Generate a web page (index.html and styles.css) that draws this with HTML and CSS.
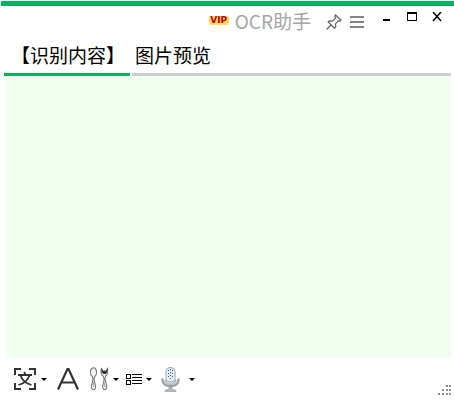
FILE: index.html
```html
<!DOCTYPE html>
<html lang="zh-CN">

<head>
  <meta charset="utf-8">
  <meta name="viewport" content="width=device-width, initial-scale=1">
  <title>OCR助手</title>
  <link rel="stylesheet" href="styles.css">
</head>

<body>
  <div class="window">
    <header class="titlebar">
      <span class="vip">VIP</span>
      <h1 class="title">OCR助手</h1>
      <button class="icon-btn pin" type="button" aria-label="置顶">
        <svg width="16" height="16" viewBox="0 0 16 16" fill="none" stroke="#606060" stroke-width="1.200">
          <path d="M9.500 1l5.500 5-1.200 1.200-1.200-.5-3.200 3.200.4 3-1.300 1.300L2.200 8l1.300-1.200 3 .3 3.200-3.300-.9-1.600zM5 11L.5 15.500" />
        </svg>
      </button>
      <button class="icon-btn menu" type="button" aria-label="菜单">
        <svg width="14" height="12" viewBox="0 0 14 12" fill="#858585">
          <path d="M0 0h14v2H0zM0 5h14v2H0zM0 10h14v2H0z" />
        </svg>
      </button>
      <div class="controls">
        <button class="win-btn" type="button" aria-label="最小化">
          <svg width="10" height="10" viewBox="0 0 10 10"><path d="M1 7h7v2H1z" /></svg>
        </button>
        <button class="win-btn" type="button" aria-label="最大化">
          <svg width="10" height="10" viewBox="0 0 10 10"><path d="M0 0h10v9H0zM1 2v6h8V2z" fill-rule="evenodd" /></svg>
        </button>
        <button class="win-btn" type="button" aria-label="关闭">
          <svg width="10" height="10" viewBox="0 0 10 10"><path d="M1 0l8 9M9 0L1 9" stroke="#000" stroke-width="1.500" /></svg>
        </button>
      </div>
    </header>

    <nav class="tabs">
      <button class="tab active" type="button">【识别内容】</button>
      <button class="tab rest" type="button">图片预览</button>
    </nav>

    <textarea class="content" aria-label="识别内容"></textarea>

    <footer class="toolbar">
      <button class="tool scan" type="button" aria-label="识别文字">
        <svg width="22" height="22" viewBox="0 0 22 22" fill="none" stroke="#333" stroke-width="2">
          <path d="M1 7V1h6M15 1h6v6M21 15v6h-6M7 21H1v-6" />
          <path d="M4 7h14M10 4l2 3M6.500 7.500C8 12 12 15.500 17.500 17M15.500 7.500C14 12 10 15.500 4.500 17" stroke-width="1.800" />
        </svg>
        <span class="arrow"></span>
      </button>
      <button class="tool font" type="button" aria-label="字体">
        <svg width="22" height="22" viewBox="0 0 22 22" fill="none" stroke="#333" stroke-width="2.200">
          <path d="M1 21.500L10.500 1h1L21 21.500M5 14.500h12" />
        </svg>
      </button>
      <button class="tool tools" type="button" aria-label="工具">
        <svg width="18" height="24" viewBox="0 0 18 24" fill="#f6f6f6" stroke="#777" stroke-width="1.100">
          <path d="M2.300 9.500C.3 8 .3 5 .6 4c.5-4.300 5.300-4.300 5.800 0 .3 1 .3 4-1.700 5.500L4 12l1.500 7c.5 5-4.500 5-4 0L3 12z" />
          <path d="M3.500 15v5" stroke="#aaa" />
          <path d="M13 9c-2.300-1.500-2.500-5.500-1.500-7.500l1.500 2.500h3.500L17.500 1.500c.8 2 .5 6-2 7.500L15 12l1.700 7c.5 5-4.500 5-4 0l1.500-7z" />
          <path d="M11.500 1.500L13 4h3l1.500-2.500v3.500l-2 2h-2l-2-2z" fill="#333" stroke="none" />
          <path d="M14.700 15v5" stroke="#aaa" />
        </svg>
        <span class="arrow"></span>
      </button>
      <button class="tool list" type="button" aria-label="段落">
        <svg width="16" height="11" viewBox="0 0 16 11">
          <path d="M0 0h5v5H0zM1 1v3h3V1zM0 6h5v5H0zM1 7v3h3V7zM6 0h10v1H6zM6 3h10v1H6zM6 6h10v1H6zM6 9h10v1H6z" fill-rule="evenodd" />
        </svg>
        <span class="arrow"></span>
      </button>
      <button class="tool mic" type="button" aria-label="朗读">
        <svg width="19" height="25" viewBox="0 0 19 25">
          <path d="M1.500 11.500v1.500c0 4 3.500 6 8 6s8-2 8-6v-1.500" fill="none" stroke="#969da2" stroke-width="2.200" />
          <path d="M8 20h3v2l4 1.500v1H4v-1L8 22z" fill="#b5babd" stroke="#92989c" stroke-width=".6" />
          <rect x="5" y=".5" width="9" height="16" rx="4" fill="#e4eef6" stroke="#a0a6ac" />
          <path d="M7.500 3v9M9.500 2v11M11.500 3v9" stroke="#454d56" stroke-width="1" stroke-dasharray="1 2" />
          <path d="M4 13c2 2.200 9 2.200 11 0v2.500c-2 2.500-9 2.500-11 0z" fill="#c9d3da" stroke="#8f979e" stroke-width=".6" />
        </svg>
        <span class="arrow"></span>
      </button>
      <svg class="grip" width="13" height="10" viewBox="0 0 13 10" fill="#8f8f8f">
        <path d="M8 0h2v2H8zM11 0h2v2h-2zM4 4h2v2H4zM8 4h2v2H8zM11 4h2v2h-2zM0 8h2v2H0zM4 8h2v2H4zM8 8h2v2H8zM11 8h2v2h-2z" />
      </svg>
    </footer>
  </div>
</body>

</html>
```
FILE: styles.css
```css
* {
  box-sizing: border-box;
}

body {
  margin: 0;
  background-color: white;
  font-family: "Noto Sans CJK SC", sans-serif;
  font-size: 19px;
}

button {
  border: none;
  padding: 0;
  background: none;
  color: black;
  font: inherit;
  cursor: pointer;
}

svg {
  display: block;
}

.window {
  display: flex;
  flex-direction: column;
  height: 100vh;
  padding: 1px 0 0 1px;
}

.titlebar {
  display: flex;
  justify-content: flex-end;
  height: 36px;
  border-top: 5px solid #00b259;
  padding: 0 5px 0 0;
}

.vip {
  width: 20px;
  height: 9px;
  margin: 10px 6px 0 0;
  border-radius: 2px;
  background-color: #ffd966;
  color: #c00000;
  font-family: "DejaVu Sans", sans-serif;
  font-size: 9px;
  font-weight: bold;
  line-height: 9px;
  text-align: center;
}

.title {
  margin: 0 15px 0 0;
  color: #a5a5a5;
  font-size: 19px;
  font-weight: normal;
  line-height: 30px;
}

.icon-btn {
  display: flex;
  align-items: flex-start;
  padding-top: 8px;
}

.menu {
  margin: 0 10px 0 8px;
  padding-top: 10px;
}

.controls {
  display: flex;
  height: 21px;
}

.win-btn {
  display: flex;
  align-items: center;
  justify-content: center;
  width: 25px;
}

.tabs {
  display: flex;
  gap: 2px;
  height: 39px;
  padding: 0 3px;
}

.tab {
  border-bottom: 3px solid #ccc;
  line-height: 36px;
  text-align: left;
}

.active {
  border-color: #00b259;
  padding: 0 5px 0 7px;
}

.rest {
  flex: 1;
  padding-left: 3px;
}

.content {
  flex: 1;
  min-height: 0;
  margin: 0 3px 0 5px;
  border: none;
  padding: 4px;
  background-color: #f0fff0;
  font: inherit;
  outline: none;
  resize: none;
}

.toolbar {
  display: flex;
  align-items: center;
  height: 46px;
  padding: 0 3px 4px 13px;
}

.tool {
  display: flex;
  align-items: center;
}

.arrow {
  margin-left: 5px;
  border: 3px solid transparent;
  border-top-color: black;
  border-bottom: none;
}

.font {
  margin: 0 11px 0 10px;
}

.list {
  margin: 0 9px 0 7px;
}

.list .arrow {
  margin-left: 4px;
}

.mic .arrow {
  margin-left: 9px;
}

.grip {
  align-self: flex-end;
  margin: 0 0 5px auto;
}
```
